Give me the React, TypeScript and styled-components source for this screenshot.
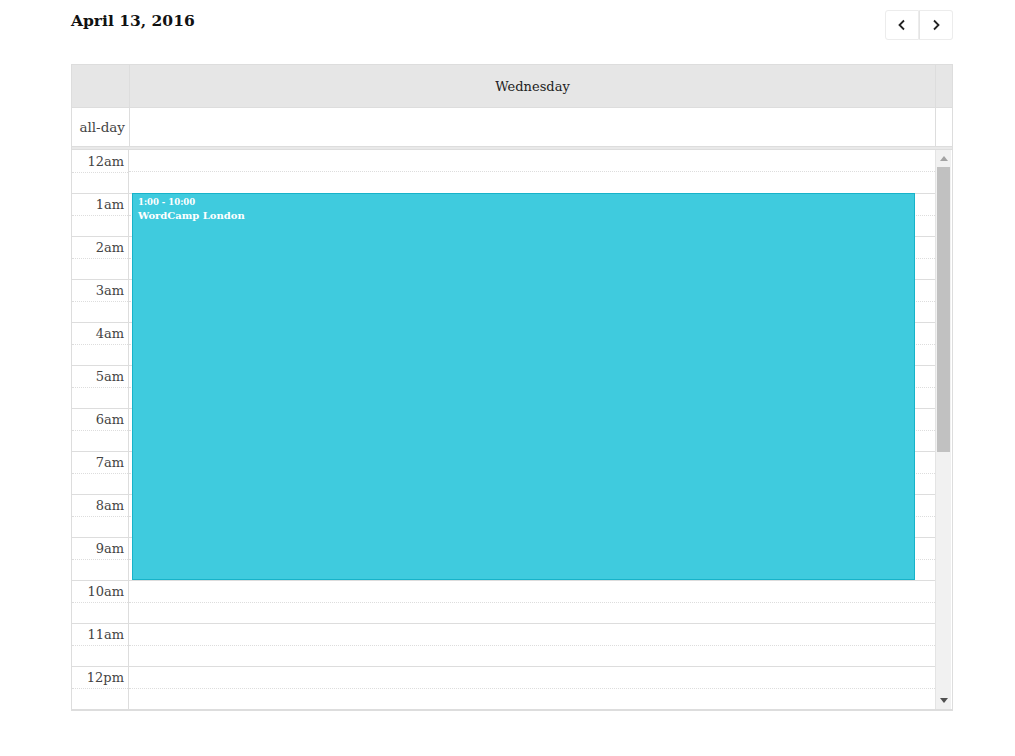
import React from "react";
import styled, { createGlobalStyle } from "styled-components";

const Global = createGlobalStyle`
  html, body { margin: 0; padding: 0; background: #fff; }
  body { font-family: "DejaVu Serif", "Liberation Serif", serif; color: #333; }
`;

const HOUR = 43;
const hours = ["12am","1am","2am","3am","4am","5am","6am","7am","8am","9am","10am","11am","12pm"];

const Page = styled.div`
  width: 882px;
  margin-left: 71px;
  padding-top: 10px;
`;

const Toolbar = styled.div`
  display: flex;
  justify-content: space-between;
  align-items: flex-start;
  height: 54px;
`;

const Title = styled.h2`
  margin: 0;
  font-size: 15.5px;
  font-weight: bold;
  color: #111;
  line-height: 22px;
`;

const ButtonGroup = styled.div`
  display: flex;
`;

const NavButton = styled.button<{ $side: "left" | "right" }>`
  width: 34px;
  height: 30px;
  padding: 0;
  display: flex;
  align-items: center;
  justify-content: center;
  background: #fff;
  border: 1px solid #ececec;
  border-left-width: ${(p) => (p.$side === "right" ? "0" : "1px")};
  border-radius: ${(p) => (p.$side === "left" ? "3px 0 0 3px" : "0 3px 3px 0")};
  box-shadow: ${(p) => (p.$side === "right" ? "inset 1px 0 0 #e4e4e4" : "none")};
  color: #222;
`;

const Calendar = styled.div`
  border: 1px solid #ddd;
  border-bottom: 2px solid #ddd;
`;

const Row = styled.div<{ $height: number; $bg?: string }>`
  display: grid;
  grid-template-columns: 57px 805px 16px;
  column-gap: 1px;
  background: #ddd;
  height: ${(p) => p.$height}px;
  border-bottom: 1px solid #ddd;
  & > * { background: ${(p) => p.$bg || "#fff"}; }
`;

const AxisCell = styled.div`
  display: flex;
  align-items: center;
  justify-content: flex-end;
  padding-right: 4px;
  font-size: 13.5px;
  color: #444;
`;

const HeadCell = styled.div`
  display: flex;
  align-items: center;
  justify-content: center;
  font-size: 13px;
  color: #222;
`;

const Divider = styled.div`
  height: 2px;
  background: #e9e9e9;
  border-bottom: 1px solid #ddd;
`;

const Body = styled.div`
  display: flex;
  height: 559px;
`;

const Viewport = styled.div`
  position: relative;
  width: 863px;
  overflow: hidden;
  border-right: 1px solid #e4e4e4;
`;

const Hour = styled.div<{ $first?: boolean }>`
  display: grid;
  grid-template-columns: 57px 806px;
  height: ${HOUR}px;
  box-sizing: border-box;
  border-top: ${(p) => (p.$first ? "0" : "1px solid #ddd")};
`;

const HourLabel = styled.div`
  border-right: 1px solid #ddd;
  display: flex;
  flex-direction: column;
`;

const LabelText = styled.div<{ $first?: boolean }>`
  height: 21px;
  display: flex;
  align-items: center;
  justify-content: flex-end;
  padding-right: 4px;
  padding-top: ${(p) => (p.$first ? "1px" : "0")};
  font-size: 13px;
  color: #444;
  border-bottom: 1px dotted #ddd;
`;

const HalfSlot = styled.div`
  display: flex;
  flex-direction: column;
`;

const SlotTop = styled.div`
  height: 21px;
  border-bottom: 1px dotted #ddd;
`;

const Event = styled.div`
  position: absolute;
  box-sizing: border-box;
  background: #3fcbde;
  border: 1px solid #17b3c9;
  color: #fff;
  padding: 2px 5px;
  font-weight: bold;
`;

const EventTime = styled.div`
  font-size: 8.5px;
  line-height: 13px;
`;

const EventTitle = styled.div`
  font-size: 10px;
  line-height: 14px;
`;

const ScrollTrack = styled.div`
  width: 15px;
  background: #f1f1f1;
  display: flex;
  flex-direction: column;
  align-items: center;
`;

const Arrow = styled.div`
  height: 17px;
  width: 15px;
  display: flex;
  align-items: center;
  justify-content: center;
`;

const Thumb = styled.div`
  width: 13px;
  height: 285px;
  background: #c1c1c1;
`;

const Spacer = styled.div`
  flex: 1;
`;

const Chevron = ({ dir }: { dir: "left" | "right" }) => (
  <svg width="10" height="12" viewBox="0 0 10 12">
    <path
      d={dir === "left" ? "M7 1.5 L2.5 6 L7 10.5" : "M3 1.5 L7.5 6 L3 10.5"}
      fill="none"
      stroke="#222"
      strokeWidth="1.8"
    />
  </svg>
);

export default function App() {
  return (
    <>
      <Global />
      <Page>
        <Toolbar>
          <Title>April 13, 2016</Title>
          <ButtonGroup>
            <NavButton $side="left" aria-label="prev"><Chevron dir="left" /></NavButton>
            <NavButton $side="right" aria-label="next"><Chevron dir="right" /></NavButton>
          </ButtonGroup>
        </Toolbar>
        <Calendar>
          <Row $height={42} $bg="#e6e6e6">
            <div />
            <HeadCell>Wednesday</HeadCell>
            <div />
          </Row>
          <Row $height={38}>
            <AxisCell>all-day</AxisCell>
            <div />
            <div />
          </Row>
          <Divider />
          <Body>
            <Viewport>
              {hours.map((h, i) => (
                <Hour key={h} $first={i === 0}>
                  <HourLabel>
                    <LabelText $first={i === 0}>{h}</LabelText>
                  </HourLabel>
                  <HalfSlot>
                    <SlotTop />
                  </HalfSlot>
                </Hour>
              ))}
              <Event style={{ top: HOUR * 1, height: HOUR * 9, left: 60, width: 783 }}>
                <EventTime>1:00 - 10:00</EventTime>
                <EventTitle>WordCamp London</EventTitle>
              </Event>
            </Viewport>
            <ScrollTrack>
              <Arrow>
                <svg width="8" height="5" viewBox="0 0 8 5"><path d="M0 5 L4 0 L8 5 Z" fill="#a3a3a3" /></svg>
              </Arrow>
              <Thumb />
              <Spacer />
              <Arrow>
                <svg width="8" height="5" viewBox="0 0 8 5"><path d="M0 0 L4 5 L8 0 Z" fill="#505050" /></svg>
              </Arrow>
            </ScrollTrack>
          </Body>
        </Calendar>
      </Page>
    </>
  );
}
